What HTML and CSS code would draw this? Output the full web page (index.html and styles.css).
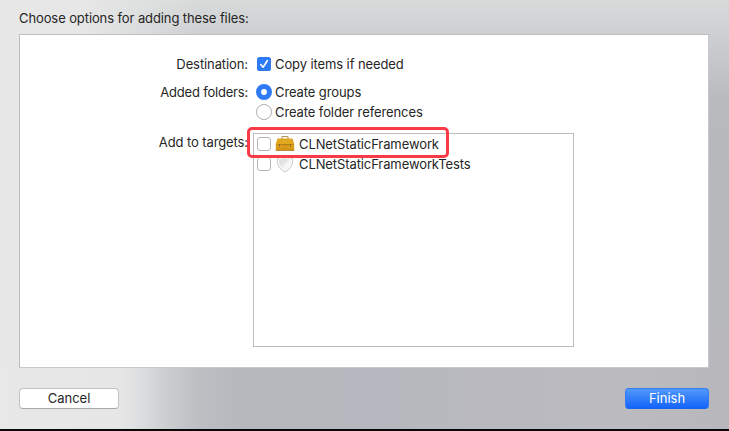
FILE: index.html
```html
<!DOCTYPE html>
<html lang="en">
<head>
<meta charset="utf-8">
<title>Add Files</title>
<link rel="stylesheet" href="styles.css">
</head>
<body>
<main class="sheet">
  <h1 class="title">Choose options for adding these files:</h1>
  <section class="panel">
    <div class="row row-destination">
      <span class="label">Destination:</span>
      <div class="option">
        <svg class="control" width="16" height="16" viewBox="0 0 16 16"><rect x="1" y="1" width="14" height="14" rx="2.6" fill="#2f7bf6"/><path d="M4.8 8.5 7.1 11.2 11.3 4.7" fill="none" stroke="#fff" stroke-width="1.6" stroke-linecap="round" stroke-linejoin="round"/></svg>
        <span>Copy items if needed</span>
      </div>
    </div>
    <div class="row row-groups">
      <span class="label label-folders">Added folders:</span>
      <div class="option">
        <svg class="control" width="16" height="16" viewBox="0 0 16 16"><circle cx="8" cy="8" r="8" fill="#2f7bf6"/><circle cx="8" cy="8" r="2.9" fill="#fff"/></svg>
        <span>Create groups</span>
      </div>
    </div>
    <div class="row row-references">
      <span class="label"></span>
      <div class="option">
        <svg class="control" width="16" height="16" viewBox="0 0 16 16"><circle cx="8" cy="8" r="7.5" fill="#fff" stroke="#adadad"/></svg>
        <span>Create folder references</span>
      </div>
    </div>
    <div class="row row-targets">
      <span class="label">Add to targets:</span>
      <div class="targets">
        <div class="target">
          <span class="box"></span>
          <svg class="icon" width="20" height="18" viewBox="0 0 20 18">
            <defs><linearGradient id="case" x2="0" y2="1"><stop stop-color="#dda51f"/><stop offset=".4" stop-color="#e2a91f"/><stop offset="1" stop-color="#cf9016"/></linearGradient></defs>
            <path d="M7 4V2.300Q7 1.500 7.800 1.500h4.400q.8 0 .8.8V4" fill="none" stroke="#b39158" stroke-width="1.1"/>
            <path d="M2.500 3.500h15L19.200 8.500V15.500H.8V8.500z" fill="url(#case)"/>
            <path d="M1 9.500h18" stroke="#b67b14" stroke-width=".6"/>
            <path d="M.8 15.500h18.400" stroke="#b57c1c" stroke-width=".8"/>
            <path d="M4.500 9v2.600m11-2.600v2.600" stroke="#8a671f" stroke-width="1"/>
            <path d="M6 9.800h8" stroke="#a87420" stroke-width=".8"/>
          </svg>
          <span class="name">CLNetStaticFramework</span>
        </div>
        <div class="target">
          <span class="box"></span>
          <svg class="icon" width="20" height="18" viewBox="0 0 20 18">
            <defs><linearGradient id="shield" x2="1" y2="1"><stop stop-color="#dadada"/><stop offset=".45" stop-color="#e8e8e8"/><stop offset=".6" stop-color="#f8f8f8"/><stop offset="1" stop-color="#eee"/></linearGradient></defs>
            <path d="M2.400 3.200Q6.500 3.200 10 1.200q3.500 2 7.600 2Q19 12.500 10 17 1 12.500 2.400 3.200Z" fill="#fafafa" stroke="#c4c4c4" stroke-width=".9"/>
            <path d="M4 4.500Q7.300 4.400 10 3q2.700 1.400 6 1.500Q16.500 11.500 10 15 3.500 11.500 4 4.500Z" fill="url(#shield)"/>
          </svg>
          <span class="name">CLNetStaticFrameworkTests</span>
        </div>
        <div class="highlight"></div>
      </div>
    </div>
  </section>
  <footer class="actions">
    <button class="button cancel">Cancel</button>
    <button class="button finish">Finish</button>
  </footer>
</main>
</body>
</html>
```
FILE: styles.css
```css
* { box-sizing: border-box; }
body { margin: 0; font: 13px/20px Inter, "Liberation Sans", sans-serif; letter-spacing: -0.1px; color: #262626; }
.sheet {
  width: 729px; height: 431px; padding: 8px 20px 0 19px; overflow: hidden;
  display: flex; flex-direction: column;
  border-bottom: 2px solid #08080a;
  background:
    linear-gradient(90deg, #e8e8e8 0, #e6e6e7 120px, #dddedf 140px, #cdced0 165px, #bcbec2 200px, #b7b8be 240px, #b7b8bf 380px, #bbbbbf 640px, #b8b8bc 729px) 0 100% / 100% 62px no-repeat,
    linear-gradient(90deg, #e7e7e7 0, #e7e7e7 80px, rgba(231, 231, 231, 0) 200px) 0 0 / 100% 36px no-repeat,
    linear-gradient(90deg, #e7e7e7 0, #e7e7e7 30px, rgba(231, 231, 231, 0) 31px),
    linear-gradient(#d8dada 0, #cdd0d2 35px, #c2c4c8 70px, #b8babe 100px, #b6b8bb 170px, #b8b8bc 100%);
}
.title { margin: 0; height: 26px; font-size: 13px; font-weight: 400; line-height: 21px; white-space: nowrap; }
.panel { height: 334px; padding-top: 19px; background: #fff; border: 1px solid #bdbebf; border-right-color: #c9c9cc; border-bottom-color: #c9c9cc; }
.row { display: flex; height: 20px; white-space: nowrap; }
.label { flex: none; width: 228px; text-align: right; }
.label-folders { letter-spacing: -0.2px; }
.option { display: flex; align-items: center; gap: 3px; margin-left: 8px; }
.control { flex: none; }
.row-groups { margin-top: 8px; }
.row-targets { height: 214px; margin-top: 10px; }
.targets { position: relative; width: 321px; height: 214px; margin: 1px 0 0 5px; padding-left: 3px; border: 1px solid #bdbdbd; }
.target { display: flex; align-items: center; height: 20px; }
.box { width: 14px; height: 14px; border: 1px solid #b5b5b5; border-radius: 3px; background: #fff; }
.icon { margin-left: 4px; }
.name { margin-left: 4px; }
.highlight { position: absolute; left: -7px; top: -7px; width: 202px; height: 31px; border: 3px solid #f83b46; border-radius: 5px; }
.actions { display: flex; justify-content: space-between; margin-top: 20px; }
.button { height: 21px; padding: 0; font: 13px/19px Inter, "Liberation Sans", sans-serif; border-radius: 4px; }
.cancel { width: 100px; color: #262626; background: #fff; border: 1px solid #c2c2c3; border-bottom-color: #a8a8aa; }
.finish { width: 84px; color: #fff; border: 1px solid #347bf0; border-bottom-color: #1965ef; background: linear-gradient(#5299fb, #1464fb); }
```
